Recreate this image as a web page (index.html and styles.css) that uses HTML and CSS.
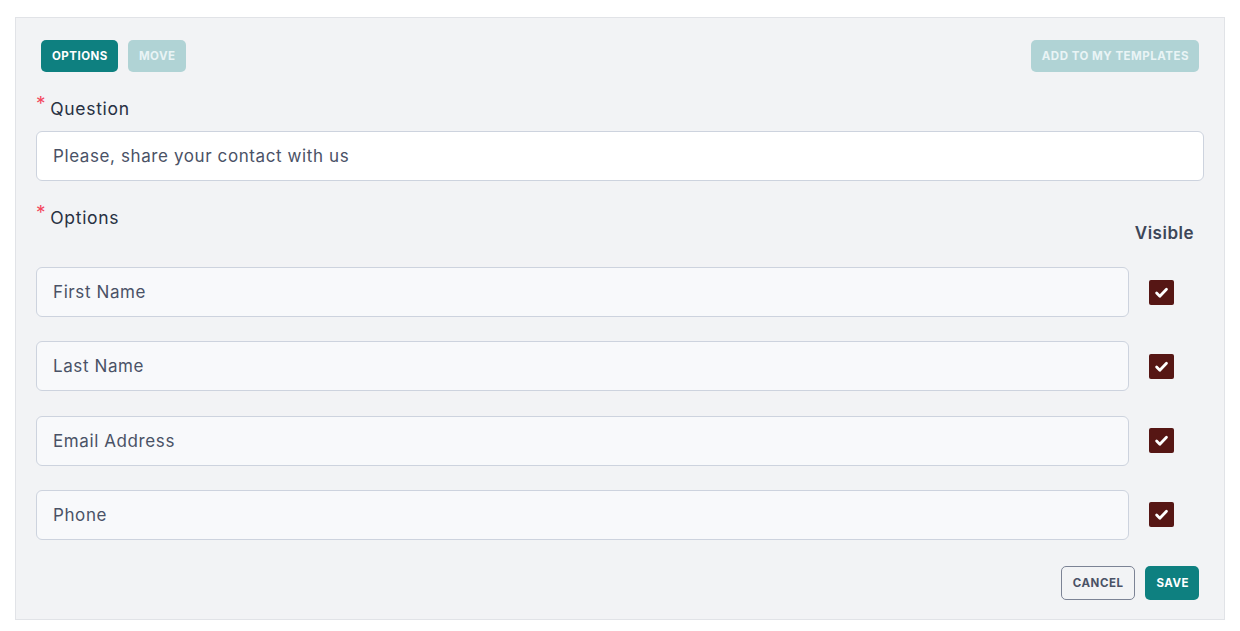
FILE: index.html
```html
<!DOCTYPE html>
<html lang="en">
<head>
<meta charset="utf-8">
<title>Question editor</title>
<link rel="stylesheet" href="styles.css">
</head>
<body>
<div class="panel">
  <div class="toolbar">
    <div class="tabs">
      <button class="btn btn-primary">Options</button>
      <button class="btn btn-disabled">Move</button>
    </div>
    <button class="btn btn-disabled">Add to my templates</button>
  </div>

  <label class="label label-question"><span class="req">*</span>Question</label>
  <div class="input input-question">Please, share your contact with us</div>

  <div class="options-head">
    <label class="label"><span class="req">*</span>Options</label>
    <div class="visible-head">Visible</div>
  </div>

  <div class="rows">
    <div class="row">
      <div class="input input-option">First Name</div>
      <div class="check-cell"><span class="check"><svg viewBox="0 0 16 16" width="15" height="15"><path d="M2.8 8.6l3.4 3.3L13.3 4.6" fill="none" stroke="#fff" stroke-width="3" stroke-linecap="round" stroke-linejoin="round"/></svg></span></div>
    </div>
    <div class="row">
      <div class="input input-option">Last Name</div>
      <div class="check-cell"><span class="check"><svg viewBox="0 0 16 16" width="15" height="15"><path d="M2.8 8.6l3.4 3.3L13.3 4.6" fill="none" stroke="#fff" stroke-width="3" stroke-linecap="round" stroke-linejoin="round"/></svg></span></div>
    </div>
    <div class="row">
      <div class="input input-option">Email Address</div>
      <div class="check-cell"><span class="check"><svg viewBox="0 0 16 16" width="15" height="15"><path d="M2.8 8.6l3.4 3.3L13.3 4.6" fill="none" stroke="#fff" stroke-width="3" stroke-linecap="round" stroke-linejoin="round"/></svg></span></div>
    </div>
    <div class="row">
      <div class="input input-option">Phone</div>
      <div class="check-cell"><span class="check"><svg viewBox="0 0 16 16" width="15" height="15"><path d="M2.8 8.6l3.4 3.3L13.3 4.6" fill="none" stroke="#fff" stroke-width="3" stroke-linecap="round" stroke-linejoin="round"/></svg></span></div>
    </div>
  </div>

  <div class="footer">
    <button class="btn btn-outline">Cancel</button>
    <button class="btn btn-primary btn-save">Save</button>
  </div>
</div>
</body>
</html>
```

FILE: styles.css
```css
* { box-sizing: border-box; }

body {
  margin: 0;
  background: #ffffff;
  font-family: Inter, "Open Sans", sans-serif;
  color: #2f3747;
}

.panel {
  margin: 17px 0 0 15px;
  width: 1210px;
  height: 603px;
  background: #f2f3f5;
  border: 1px solid #e1e3e7;
  padding: 22px 20px 0 20px;
}

.toolbar {
  display: flex;
  justify-content: space-between;
  align-items: flex-start;
  padding: 0 5px;
}

.tabs {
  display: flex;
  gap: 10px;
}

.btn {
  font-family: Inter, "Open Sans", sans-serif;
  font-weight: 700;
  font-size: 11.5px;
  text-transform: uppercase;
  letter-spacing: 0.5px;
  border-radius: 5px;
  border: none;
  height: 32px;
  padding: 0 10px 0 11px;
  cursor: pointer;
}

.btn-primary {
  background: #0e8080;
  color: #ffffff;
}

.btn-disabled {
  background: #b0d3d5;
  color: #e9f4f5;
}

.btn-outline {
  background: transparent;
  color: #4a5266;
  border: 1px solid #7c8395;
  height: 34px;
  padding: 0 11px 0 11px;
}

.btn-save {
  height: 34px;
  padding: 0 10px 0 11px;
}

.label {
  display: block;
  font-size: 17.5px;
  line-height: 24px;
  font-weight: 400;
  letter-spacing: 0.7px;
  color: #283043;
}

.label-question {
  margin-top: 25px;
  margin-bottom: 10px;
}

.req {
  position: relative;
  top: -5px;
  color: #f4475e;
  font-size: 19px;
  margin-right: 4px;
  margin-left: 0;
}

.input {
  display: flex;
  align-items: center;
  height: 50px;
  border: 1px solid #cdd3de;
  border-radius: 6px;
  padding: 0 16px;
  font-size: 17px;
  letter-spacing: 0.6px;
  color: #4a5266;
}

.input-question {
  background: #ffffff;
}

.options-head {
  display: flex;
  justify-content: space-between;
  align-items: flex-start;
  margin-top: 25px;
}

.visible-head {
  font-size: 17px;
  font-weight: 600;
  line-height: 24px;
  letter-spacing: 0.5px;
  color: #3d4658;
  margin-top: 15px;
  padding-right: 10px;
}

.rows {
  display: flex;
  flex-direction: column;
  gap: 24.3px;
  margin-top: 22px;
}

.row {
  display: flex;
  align-items: center;
}

.input-option {
  flex: 1;
  background: #f8f9fb;
}

.check-cell {
  width: 75px;
  display: flex;
  padding-left: 20px;
}

.check {
  width: 25px;
  height: 25px;
  border-radius: 2px;
  background: #561614;
  display: flex;
  align-items: center;
  justify-content: center;
}

.footer {
  display: flex;
  justify-content: flex-end;
  gap: 10px;
  margin-top: 26px;
  padding-right: 5px;
}
```
